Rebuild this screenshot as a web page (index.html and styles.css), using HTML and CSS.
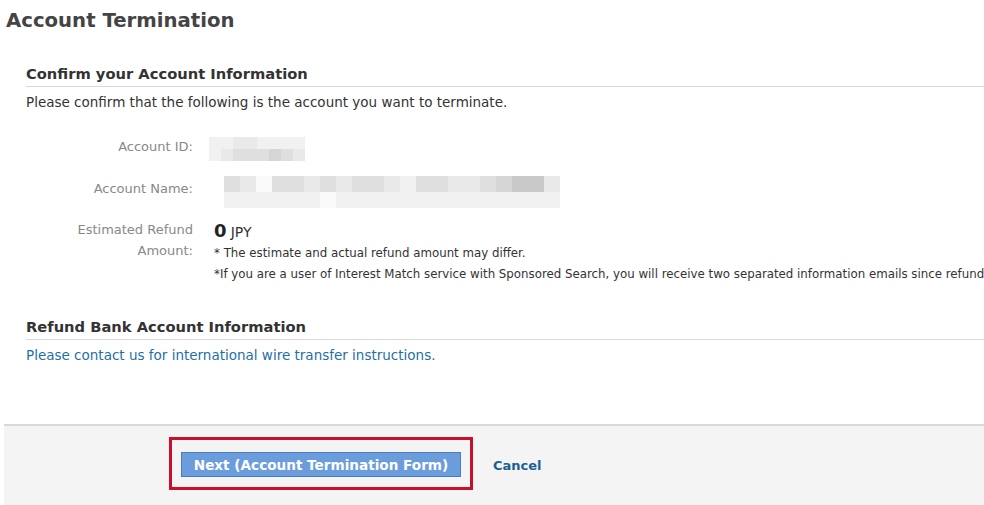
FILE: index.html
```html
<!DOCTYPE html>
<html lang="en">
<head>
  <meta charset="UTF-8" />
  <title>Account Termination</title>
  <link rel="stylesheet" href="styles.css">
</head>
<body>
  <h1 class="page-title">Account Termination</h1>

  <div class="section">
    <h2 class="section-title">Confirm your Account Information</h2>
    <p class="intro">Please confirm that the following is the account you want to terminate.</p>

    <div class="info-row row-id">
      <div class="info-label">Account ID:</div>
      <div class="info-value">
        <div class="blur blur-id">
          <div class="blur-line">
            <span class="b1"></span><span class="b1"></span><span class="b2"></span><span class="b2"></span><span class="b1"></span><span class="b1"></span><span class="b1"></span><span class="b1"></span>
          </div>
          <div class="blur-line">
            <span class="b1"></span><span class="b2"></span><span class="b3"></span><span class="b3"></span><span class="b3"></span><span class="b4"></span><span class="b3"></span><span class="b2"></span>
          </div>
        </div>
      </div>
    </div>

    <div class="info-row row-name">
      <div class="info-label">Account Name:</div>
      <div class="info-value">
        <div class="blur blur-name">
          <div class="blur-line tall">
            <span class="b3"></span><span class="b2"></span><span class="b0"></span><span class="b3"></span><span class="b3"></span><span class="b2"></span><span class="b3"></span><span class="b2"></span><span class="b3"></span><span class="b3"></span><span class="b2"></span><span class="b1"></span><span class="b3"></span><span class="b3"></span><span class="b2"></span><span class="b2"></span><span class="b3"></span><span class="b4"></span><span class="b5"></span><span class="b5"></span><span class="b2"></span>
          </div>
          <div class="blur-line tall">
            <span class="b1"></span><span class="b1"></span><span class="b1"></span><span class="b1"></span><span class="b1"></span><span class="b1"></span><span class="b0"></span><span class="b1"></span><span class="b1"></span><span class="b1"></span><span class="b1"></span><span class="b1"></span><span class="b1"></span><span class="b1"></span><span class="b1"></span><span class="b1"></span><span class="b1"></span><span class="b1"></span><span class="b1"></span><span class="b1"></span><span class="b1"></span>
          </div>
        </div>
      </div>
    </div>

    <div class="info-row row-refund">
      <div class="info-label">Estimated Refund<br>Amount:</div>
      <div class="info-value">
        <div class="amount"><strong>0</strong> <span class="currency">JPY</span></div>
        <p class="note">* The estimate and actual refund amount may differ.</p>
        <p class="note">*If you are a user of Interest Match service with Sponsored Search, you will receive two separated information emails since refund</p>
      </div>
    </div>
  </div>

  <div class="section section-bank">
    <h2 class="section-title">Refund Bank Account Information</h2>
    <p class="contact">Please contact us for international wire transfer instructions.</p>
  </div>

  <div class="footer">
    <div class="highlight">
      <button class="btn-next">Next (Account Termination Form)</button>
    </div>
    <a class="cancel" href="#">Cancel</a>
  </div>
</body>
</html>
```

FILE: styles.css
```css
body {
  margin: 0;
  font-family: "DejaVu Sans", Verdana, sans-serif;
  font-size: 13px;
  color: #333;
  background-color: #fff;
  overflow: hidden;
}

.page-title {
  margin: 0;
  padding: 9px 0 0 6px;
  font-size: 19.7px;
  font-weight: bold;
  color: #444;
  height: 40px;
  box-sizing: border-box;
}

.section {
  padding-left: 26px;
  margin-top: 25px;
}

.section-title {
  margin: 0;
  font-size: 14.7px;
  line-height: 18px;
  font-weight: bold;
  color: #333;
  padding-bottom: 3px;
  border-bottom: 1px solid #d9d9d9;
}

.intro {
  margin: 6px 0 0;
  font-size: 13.5px;
  line-height: 18px;
}

.info-row {
  display: flex;
}

.info-label {
  width: 167px;
  text-align: right;
  color: #888;
  line-height: 21px;
  flex-shrink: 0;
}

.info-value {
  padding-left: 21px;
  white-space: nowrap;
}

.row-id {
  margin-top: 25px;
}

.row-name {
  margin-top: 15px;
}

.row-name .info-label {
  padding-top: 2px;
}

.row-name .info-value {
  padding-left: 31px;
}

.row-refund {
  margin-top: 11px;
}

.blur-line {
  display: flex;
  height: 12px;
}

.blur-line.tall {
  height: 16px;
}

.blur-line span {
  width: 12px;
  height: 100%;
}

.blur-name .blur-line span {
  width: 16px;
}

.blur-id {
  margin-left: -5px;
  margin-top: 1px;
}

.b0 { background-color: #fafafa; }
.b1 { background-color: #f1f1f1; }
.b2 { background-color: #e9e9e9; }
.b3 { background-color: #dfdfdf; }
.b4 { background-color: #d5d5d5; }
.b5 { background-color: #c9c9c9; }

.amount {
  line-height: 21px;
  padding-top: 1px;
}

.amount strong {
  font-size: 18px;
  color: #222;
}

.currency {
  font-size: 14px;
}

.note {
  margin: 0;
  font-size: 11.8px;
  line-height: 21px;
}

.section-bank {
  margin-top: 33px;
}

.contact {
  margin: 6px 0 0;
  font-size: 13.5px;
  line-height: 18px;
  color: #1f6fa8;
}

.footer {
  margin: 60px 0 0 4px;
  height: 80px;
  border-top: 2px solid #d8d8d8;
  background-color: #f4f4f4;
  display: flex;
  align-items: flex-start;
  padding-left: 165px;
}

.highlight {
  margin-top: 11px;
  border: 3px solid #c8102e;
  padding: 12px 9px 10px;
}

.btn-next {
  background-color: #6b9cdc;
  border: 1px solid #4a7cc0;
  color: #fff;
  font-family: "DejaVu Sans", Verdana, sans-serif;
  font-size: 13.6px;
  font-weight: bold;
  width: 280px;
  height: 25px;
  padding: 0;
  cursor: pointer;
}

.cancel {
  margin: 32px 0 0 20px;
  font-size: 13px;
  color: #1d5f94;
  font-weight: bold;
  text-decoration: none;
}
```
